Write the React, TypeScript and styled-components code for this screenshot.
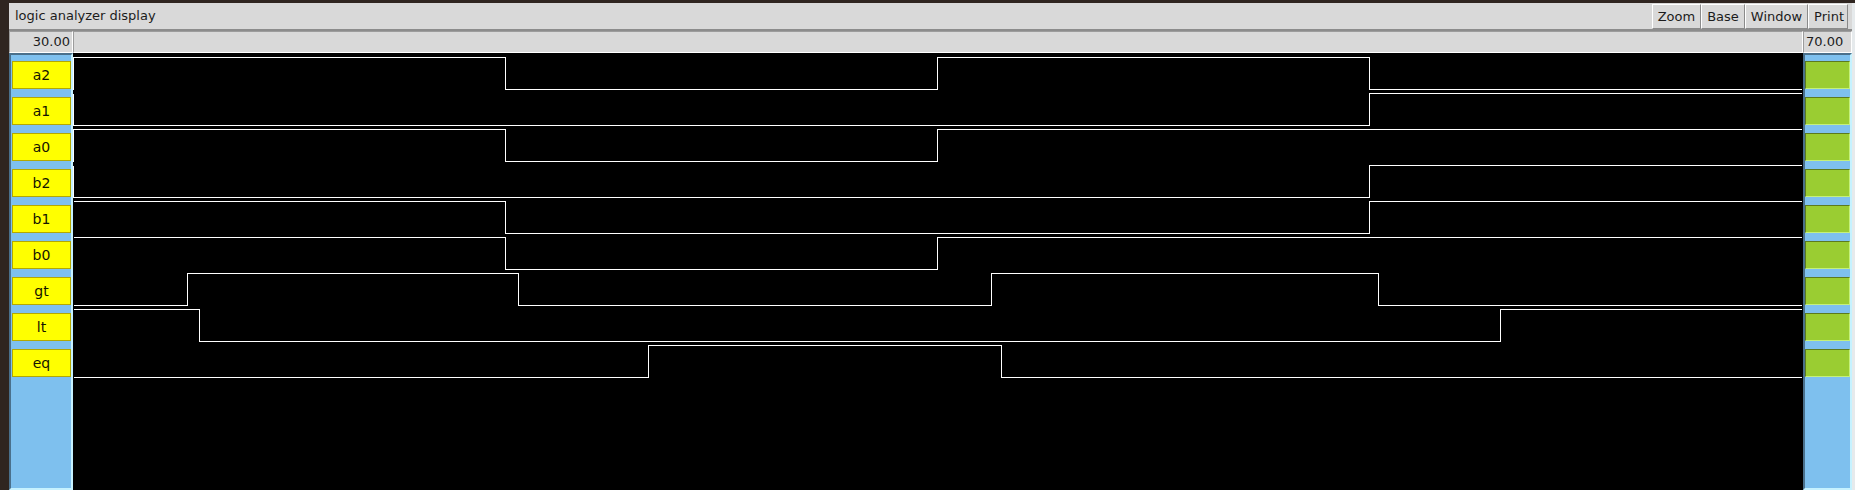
import React from "react";
import styled, { createGlobalStyle } from "styled-components";

const GlobalStyle = createGlobalStyle`
  html, body {
    margin: 0;
    padding: 0;
  }
  body {
    background: #2f2520;
    overflow: hidden;
    font-family: "DejaVu Sans", "Liberation Sans", sans-serif;
  }
`;

const ROW = 36;
const TRACE_W = 1728;

type Signal = { name: string; init: 0 | 1; edge: boolean; toggles: number[] };

const signals: Signal[] = [
    { name: "a2", init: 1, edge: true, toggles: [432, 864, 1296] },
    { name: "a1", init: 0, edge: true, toggles: [1296] },
    { name: "a0", init: 1, edge: true, toggles: [432, 864] },
    { name: "b2", init: 0, edge: true, toggles: [1296] },
    { name: "b1", init: 1, edge: false, toggles: [432, 1296] },
    { name: "b0", init: 1, edge: false, toggles: [432, 864] },
    { name: "gt", init: 0, edge: false, toggles: [114, 445, 918, 1305] },
    { name: "lt", init: 1, edge: false, toggles: [126, 1427] },
    { name: "eq", init: 0, edge: false, toggles: [575, 928] }
];

const Screen = styled.div`
    height: 490px;
    box-sizing: border-box;
    padding: 3px 0 0 9px;
    display: flex;
`;

const Window = styled.div`
    flex: 1;
    display: flex;
    flex-direction: column;
    background: #d9d9d9;
    border-right: 3px solid #e6eaec;
`;

const TitleBar = styled.div`
    height: 26px;
    display: flex;
    align-items: flex-start;
    border-bottom: 2px solid #8c8c8c;
`;

const Title = styled.div`
    flex: 1;
    padding-left: 6px;
    font-size: 13px;
    line-height: 25px;
    color: #1c1c1c;
`;

const ButtonGroup = styled.div`
    display: flex;
    padding-right: 4px;
`;

const ToolButton = styled.div`
    height: 25px;
    margin-top: 1px;
    box-sizing: border-box;
    padding: 0 5px;
    border: 1px solid;
    border-color: #ffffff #8a8a8a #8a8a8a #ffffff;
    font-size: 13px;
    line-height: 23px;
    color: #1c1c1c;

    &:last-child {
        padding: 0 3px 0 5px;
    }
`;

const Ruler = styled.div`
    height: 22px;
    display: flex;
`;

const TimeBox = styled.div<{ $right?: boolean; $w: number }>`
    width: ${p => p.$w}px;
    box-sizing: border-box;
    border: 1px solid;
    border-color: #9c9c9c #ffffff #ffffff #9c9c9c;
    padding: 0 2px;
    font-size: 13px;
    line-height: 20px;
    color: #1c1c1c;
    text-align: ${p => (p.$right ? "right" : "left")};
`;

const RulerTrack = styled.div`
    flex: 1;
    box-sizing: border-box;
    border: 1px solid;
    border-color: #9c9c9c #ffffff #ffffff #9c9c9c;
`;

const Body = styled.div`
    flex: 1;
    display: flex;
    min-height: 0;
`;

const SidePanel = styled.div<{ $w: number }>`
    width: ${p => p.$w}px;
    box-sizing: border-box;
    background: #7ec0ee;
    border: 2px solid;
    border-color: #4a708b #c6f2ff #c6f2ff #4a708b;
    padding: 6px 0 0 ${p => (p.$w > 50 ? 1 : 0)}px;
    display: flex;
    flex-direction: column;
    gap: 8px;
`;

const NameTag = styled.div`
    width: 59px;
    height: 28px;
    box-sizing: border-box;
    border: 1px solid #b4a800;
    background: #ffff00;
    font-size: 14px;
    line-height: 26px;
    text-align: center;
    color: #141400;
`;

const ValueTag = styled.div`
    height: 28px;
    box-sizing: border-box;
    border: 1px solid;
    border-color: #5c7a1e #c4f07a #c4f07a #5c7a1e;
    background: #9acd32;
`;

const Trace = styled.div`
    flex: 1;
    background: #000;
    overflow: hidden;
`;

const wavePoints = (s: Signal, i: number) => {
    const hi = ROW * i + 4.5;
    const lo = ROW * i + 36.5;
    const y = (v: number) => (v ? hi : lo);
    let v = s.init;
    const pts: string[] = [];
    if (s.edge) pts.push(`0.5,${y(1 - v)}`);
    pts.push(`0.5,${y(v)}`);
    for (const t of s.toggles) {
        pts.push(`${t + 0.5},${y(v)}`);
        v = v ? 0 : 1;
        pts.push(`${t + 0.5},${y(v)}`);
    }
    pts.push(`${TRACE_W + 0.5},${y(v)}`);
    return pts.join(" ");
};

export default function App() {
    return (
        <>
            <GlobalStyle />
            <Screen>
                <Window>
                    <TitleBar>
                        <Title>logic analyzer display</Title>
                        <ButtonGroup>
                            {["Zoom", "Base", "Window", "Print"].map(b => (
                                <ToolButton key={b}>{b}</ToolButton>
                            ))}
                        </ButtonGroup>
                    </TitleBar>
                    <Ruler>
                        <TimeBox $w={64} $right>
                            30.00
                        </TimeBox>
                        <RulerTrack />
                        <TimeBox $w={49}>70.00</TimeBox>
                    </Ruler>
                    <Body>
                        <SidePanel $w={64}>
                            {signals.map(s => (
                                <NameTag key={s.name}>{s.name}</NameTag>
                            ))}
                        </SidePanel>
                        <Trace>
                            <svg width="1730" height="437" shapeRendering="crispEdges">
                                {signals.map((s, i) => (
                                    <polyline
                                        key={s.name}
                                        points={wavePoints(s, i)}
                                        fill="none"
                                        stroke="#ffffff"
                                        strokeWidth={1}
                                    />
                                ))}
                            </svg>
                        </Trace>
                        <SidePanel $w={49}>
                            {signals.map(s => (
                                <ValueTag key={s.name} />
                            ))}
                        </SidePanel>
                    </Body>
                </Window>
            </Screen>
        </>
    );
}
